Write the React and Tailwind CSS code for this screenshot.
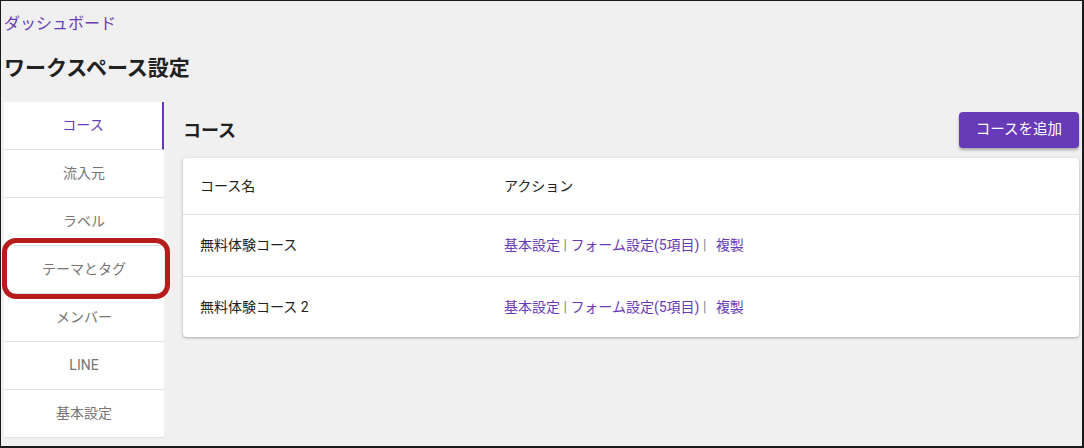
import React from "react";

const font = { fontFamily: "Roboto, 'Noto Sans CJK JP', 'Noto Sans', sans-serif" };

const navItems = ["コース", "流入元", "ラベル", "テーマとタグ", "メンバー", "LINE", "基本設定"];

function Actions() {
  return (
    <div className="text-[14px] text-[#673ab7]">
      <span>基本設定</span>
      <span className="text-[#8a8a8a]"> | </span>
      <span>フォーム設定(5項目)</span>
      <span className="text-[#8a8a8a]"> | </span>
      <span className="ml-[6px]">複製</span>
    </div>
  );
}

export default function App() {
  return (
    <div
      style={font}
      className="w-[1084px] h-[448px] bg-[#f0f0f0] border-t border-l border-r-2 border-b-2 border-[#1a1a1a] pl-[3px] pr-[3px] overflow-hidden relative"
    >
      <div className="pt-[11px] text-[16px] leading-[24px] text-[#673ab7]">ダッシュボード</div>
      <h1 className="mt-[18px] text-[21px] leading-[28px] font-bold text-[#212121]">ワークスペース設定</h1>
      <div className="mt-[20px] flex gap-[19px]">
        <div className="w-[160px] shrink-0 bg-white">
          {navItems.map((item, i) => (
            <div
              key={item}
              className={
                i === 0
                  ? "h-[48px] flex items-center justify-center text-[14px] text-[#673ab7] border-r-2 border-[#673ab7] border-b border-b-[#e0e0e0]"
                  : "h-[48px] flex items-center justify-center text-[14px] text-[#757575] border-b border-[#e0e0e0]"
              }
            >
              {item}
            </div>
          ))}
        </div>
        <div className="flex-1">
          <div className="mt-[10px] flex items-center justify-between h-[36px]">
            <h2 className="text-[18px] font-bold text-[#212121]">コース</h2>
            <button className="h-[36px] px-[17px] rounded-[4px] bg-[#673ab7] text-white text-[14.5px] shadow-[0_2px_3px_rgba(0,0,0,0.3)]">
              コースを追加
            </button>
          </div>
          <div className="mt-[10px] bg-white rounded-[4px] shadow-[0_1px_3px_rgba(0,0,0,0.3)] text-[14px] text-[#212121]">
            <div className="grid grid-cols-[321px_1fr] h-[57px] items-center border-b border-[#e0e0e0]">
              <div className="pl-[17px]">コース名</div>
              <div>アクション</div>
            </div>
            <div className="grid grid-cols-[321px_1fr] h-[62px] items-center border-b border-[#e0e0e0]">
              <div className="pl-[17px]">無料体験コース</div>
              <Actions />
            </div>
            <div className="grid grid-cols-[321px_1fr] h-[60px] items-center">
              <div className="pl-[17px]">無料体験コース 2</div>
              <Actions />
            </div>
          </div>
        </div>
      </div>
      <div className="absolute left-[1px] top-[237px] w-[168px] h-[61px] border-[5px] border-[#b71c1c] rounded-[14px] pointer-events-none" />
    </div>
  );
}
